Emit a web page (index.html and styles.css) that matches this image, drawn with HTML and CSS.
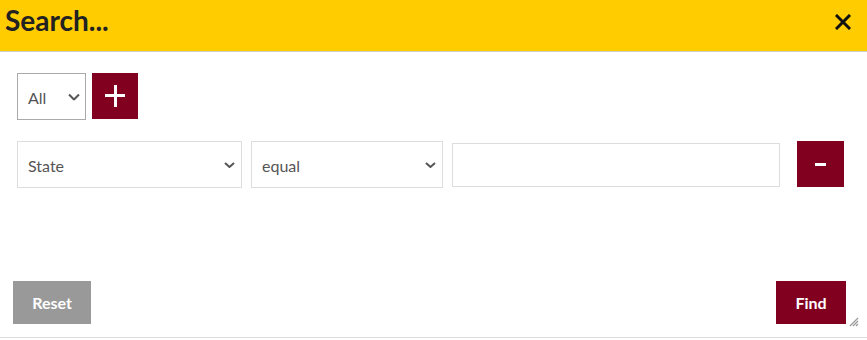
FILE: index.html
```html
<!DOCTYPE html>
<html>
<head>
    <title>Search</title>
    <link rel="stylesheet" href="styles.css">
</head>
<body>
    <div class="dialog">
        <div class="titlebar">
            <h1>Search...</h1>
            <button class="close" title="Close">
                <svg width="16" height="16" viewBox="0 0 16 16"><path d="M2 2L14 14M14 2L2 14" stroke="#111" stroke-width="3" stroke-linecap="square"/></svg>
            </button>
        </div>

        <div class="content">
            <!-- group operator -->
            <div class="group-row">
                <span class="select-wrap group-op">
                    <select><option>All</option><option>Any</option></select>
                    <svg class="chev" width="12" height="7" viewBox="0 0 12 7"><path d="M1 1L6 6L11 1" fill="none" stroke="#555" stroke-width="2"/></svg>
                </span>
                <button class="btn-add" title="Add rule">
                    <svg width="20" height="22" viewBox="0 0 20 22"><rect x="9" y="0" width="3" height="22" fill="#fff"/><rect x="0" y="9" width="20" height="3" fill="#fff"/></svg>
                </button>
            </div>

            <!-- rule -->
            <div class="rule-row">
                <span class="select-wrap field">
                    <select><option>State</option></select>
                    <svg class="chev" width="11" height="6" viewBox="0 0 11 6"><path d="M1 1L5.5 5L10 1" fill="none" stroke="#555" stroke-width="2"/></svg>
                </span>
                <span class="select-wrap op">
                    <select><option>equal</option><option>not equal</option></select>
                    <svg class="chev" width="11" height="6" viewBox="0 0 11 6"><path d="M1 1L5.5 5L10 1" fill="none" stroke="#555" stroke-width="2"/></svg>
                </span>
                <input type="text" class="value">
                <button class="btn-remove" title="Remove rule">
                    <svg width="11" height="3" viewBox="0 0 11 3"><rect width="11" height="3" fill="#fff"/></svg>
                </button>
            </div>
        </div>

        <div class="buttons">
            <button class="btn-reset">Reset</button>
            <button class="btn-find">Find</button>
        </div>
        <svg class="grip" width="10" height="10" viewBox="0 0 10 10"><path d="M9 1L1 9M9 4L4 9M9 7L7 9" stroke="#999" stroke-width="1.2"/></svg>
    </div>
</body>
</html>
```

FILE: styles.css
```css
body {
    margin: 0;
    font-family: Lato, "Liberation Sans", sans-serif;
    background-color: #fff;
}
.dialog {
    position: relative;
    height: 337px;
    display: flex;
    flex-direction: column;
    border-bottom: 1px solid #ddd;
}
.titlebar {
    height: 51px;
    background-color: #ffcc00;
    border-bottom: 1px solid #ccc;
    display: flex;
    justify-content: space-between;
    align-items: flex-start;
    padding: 0 16px 0 5px;
}
.titlebar h1 {
    margin: 0;
    font-size: 28px;
    line-height: 40px;
    font-weight: bold;
    color: #222;
}
.close {
    margin-top: 14px;
    padding: 0;
    border: none;
    background: none;
    width: 16px;
    height: 16px;
    cursor: pointer;
}
.close svg {
    display: block;
}
.content {
    padding: 21px 0 0 17px;
}
.group-row {
    display: flex;
    gap: 6px;
}
.rule-row {
    display: flex;
    align-items: flex-start;
    margin-top: 21px;
}
.select-wrap {
    position: relative;
    display: block;
}
.select-wrap select {
    appearance: none;
    -webkit-appearance: none;
    width: 100%;
    height: 100%;
    margin: 0;
    border: 1px solid #ddd;
    border-radius: 0;
    background-color: #fff;
    font-family: Lato, "Liberation Sans", sans-serif;
    font-size: 16px;
    color: #555;
    padding: 1px 0 0 10px;
}
.select-wrap .chev {
    position: absolute;
    top: 50%;
    transform: translateY(-50%);
    pointer-events: none;
}
.group-op {
    width: 69px;
    height: 47px;
}
.group-op select {
    border-color: #aaa;
}
.group-op .chev {
    right: 6px;
}
.field {
    width: 225px;
    height: 47px;
}
.field .chev,
.op .chev {
    right: 7px;
}
.op {
    width: 192px;
    height: 47px;
    margin-left: 9px;
}
.value {
    box-sizing: border-box;
    width: 328px;
    height: 44px;
    margin: 2px 0 0 9px;
    border: 1px solid #ddd;
    padding: 0 10px;
    font-family: Lato, "Liberation Sans", sans-serif;
    font-size: 16px;
}
button {
    border: none;
    border-radius: 0;
    cursor: pointer;
    color: #fff;
    font-family: Lato, "Liberation Sans", sans-serif;
    font-weight: bold;
    font-size: 16px;
}
.btn-add,
.btn-remove {
    display: flex;
    align-items: center;
    justify-content: center;
    padding: 0;
    background-color: #82001f;
}
.btn-add {
    width: 46px;
    height: 46px;
}
.btn-remove {
    width: 47px;
    height: 46px;
    margin-left: 17px;
}
.buttons {
    margin-top: auto;
    display: flex;
    justify-content: space-between;
    padding: 0 21px 13px 13px;
}
.btn-reset {
    width: 78px;
    height: 43px;
    background-color: #999;
}
.btn-find {
    width: 70px;
    height: 43px;
    background-color: #82001f;
}
.grip {
    position: absolute;
    right: 8px;
    bottom: 10px;
}
```
